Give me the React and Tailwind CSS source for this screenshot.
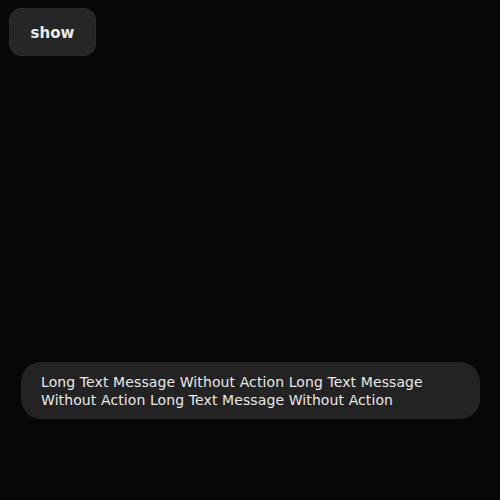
import React from "react";

const App = () => {
  return (
    <div
      className="w-[500px] h-[500px] bg-[#070707] flex flex-col"
      style={{ fontFamily: "'DejaVu Sans', sans-serif" }}
    >
      <div className="pt-[8px] pl-[9px]">
        <button className="w-[87px] h-[48px] pt-[2px] rounded-[12px] bg-[#262626] border border-[#2c2c2c] text-[#ececec] text-[15px] font-bold">
          show
        </button>
      </div>

      {/* Snackbar */}
      <div className="mt-[306px] ml-[21px] w-[459px] rounded-[20px] bg-[#232323] pl-[20px] pr-[16px] pt-[11px] pb-[10px]">
        <p className="text-[14px] leading-[18px] tracking-[0.1px] text-[#e8e8e8]">
          Long Text Message Without Action Long Text Message Without Action Long Text Message Without Action
        </p>
      </div>
    </div>
  );
};

export default App;
